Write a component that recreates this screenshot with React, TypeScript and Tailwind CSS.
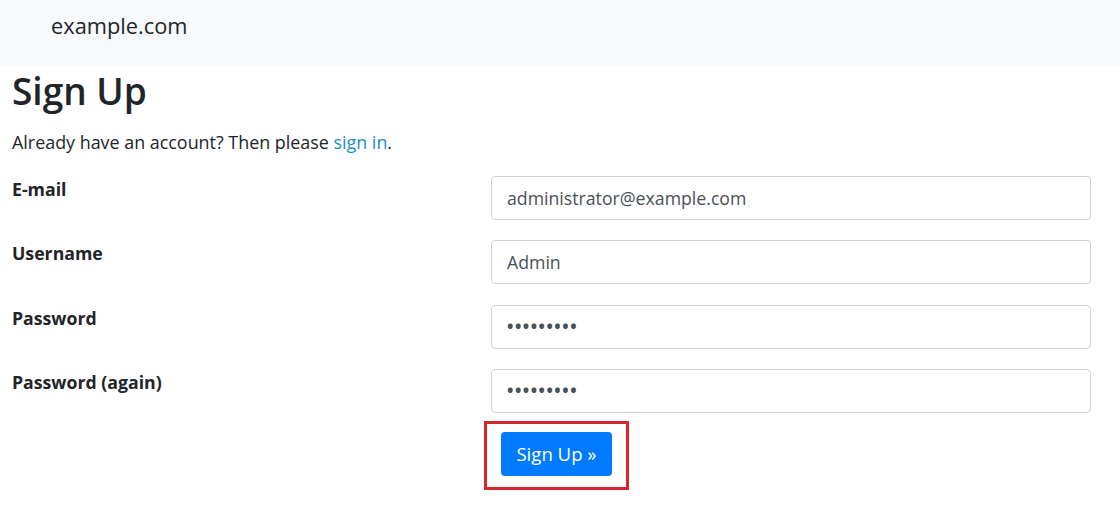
export default function App() {
  const font = { fontFamily: '"Open Sans", "Noto Sans", sans-serif' };
  const rows = [
    { label: "E-mail", value: "administrator@example.com", pw: false },
    { label: "Username", value: "Admin", pw: false },
    { label: "Password", value: "•••••••••", pw: true },
    { label: "Password (again)", value: "•••••••••", pw: true },
  ];
  return (
    <div className="w-[1120px] h-[506px] bg-white text-[#212529] overflow-hidden" style={font}>
      <nav className="h-[66px] bg-[#f8f9fa] flex items-center pl-[51px]">
        <span className="text-[21.8px] leading-none text-[#212529] -mt-[14px]">example.com</span>
      </nav>
      <div className="pl-3">
        <h1 className="text-[37px] font-semibold leading-[48px] mt-[1px]">Sign Up</h1>
        <p className="text-[17.9px] leading-[24px] mt-[15px]">
          Already have an account? Then please <a className="text-[#1a8dbf]">sign in</a>.
        </p>
        <form className="mt-[22px]">
          {rows.map((r) => (
            <div key={r.label} className="flex mb-[20.3px]">
              <label className="w-[479px] font-bold text-[17.7px] leading-[24px] pt-[1px]">{r.label}</label>
              <div className="w-[600px] h-[44px] border border-[#ced4da] rounded-[4px] flex items-center px-[15px] text-[17.7px] text-[#495057]">
                {r.pw ? <span className="tracking-[1.5px] text-[17px] font-bold">{r.value}</span> : r.value}
              </div>
            </div>
          ))}
          <div className="pl-[489px] -mt-[1px]">
            <div className="relative inline-block">
              <button type="button" className="w-[111px] h-[44px] bg-[#007bff] rounded-[4px] text-white text-[18.6px] flex items-center justify-center">
                Sign Up »
              </button>
              <div className="absolute -left-[17px] -right-[17px] -top-[11px] -bottom-[14px] border-[3px] border-[#d7262e] pointer-events-none" />
            </div>
          </div>
        </form>
      </div>
    </div>
  );
}
